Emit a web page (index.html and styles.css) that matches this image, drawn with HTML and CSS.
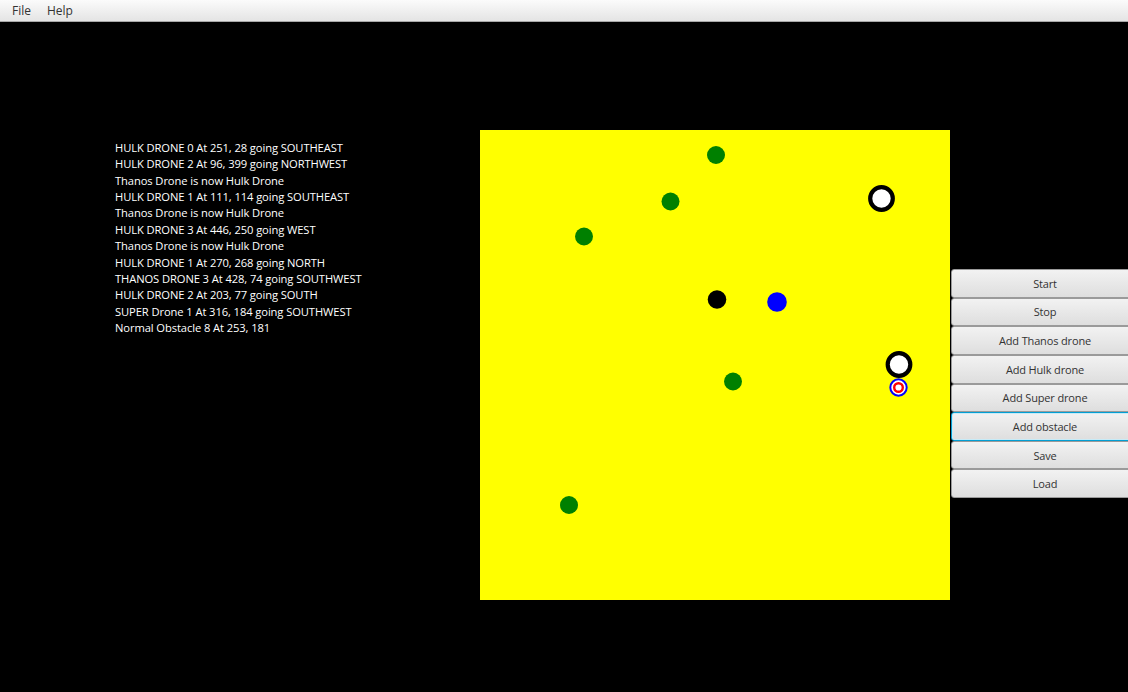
FILE: index.html
```html
<!DOCTYPE html>
<html>
<head>
<meta charset="utf-8">
<link rel="stylesheet" href="styles.css">
</head>
<body>
<div class="menubar">
  <span class="menu">File</span>
  <span class="menu">Help</span>
</div>
<div class="main">
  <div class="log">
    <div>HULK DRONE 0 At 251, 28 going SOUTHEAST</div>
    <div>HULK DRONE 2 At 96, 399 going NORTHWEST</div>
    <div>Thanos Drone is now Hulk Drone</div>
    <div>HULK DRONE 1 At 111, 114 going SOUTHEAST</div>
    <div>Thanos Drone is now Hulk Drone</div>
    <div>HULK DRONE 3 At 446, 250 going WEST</div>
    <div>Thanos Drone is now Hulk Drone</div>
    <div>HULK DRONE 1 At 270, 268 going NORTH</div>
    <div>THANOS DRONE 3 At 428, 74 going SOUTHWEST</div>
    <div>HULK DRONE 2 At 203, 77 going SOUTH</div>
    <div>SUPER Drone 1 At 316, 184 going SOUTHWEST</div>
    <div>Normal Obstacle 8 At 253, 181</div>
  </div>
  <svg class="arena" width="470" height="470" viewBox="0 0 470 470">
    <rect x="0" y="0" width="470" height="470" fill="#ffff00"/>
    <circle cx="236" cy="25" r="9" fill="#008000"/>
    <circle cx="190.5" cy="71.5" r="9" fill="#008000"/>
    <circle cx="104" cy="106.5" r="9" fill="#008000"/>
    <circle cx="253" cy="251.5" r="9" fill="#008000"/>
    <circle cx="89" cy="375" r="9" fill="#008000"/>
    <circle cx="237" cy="169.5" r="9.3" fill="#000000"/>
    <circle cx="297" cy="172" r="9.8" fill="#0000ff"/>
    <circle cx="401.5" cy="68.5" r="11.3" fill="#ffffff" stroke="#000" stroke-width="4.2"/>
    <circle cx="419" cy="234.5" r="11.3" fill="#ffffff" stroke="#000" stroke-width="4.2"/>
    <circle cx="418.5" cy="257.5" r="8.2" fill="#ffffff" stroke="#0000ff" stroke-width="2"/>
    <circle cx="418.5" cy="257.5" r="4.3" fill="#ffffff" stroke="#ff0000" stroke-width="2.4"/>
  </svg>
  <div class="buttons">
    <div class="btn">Start</div>
    <div class="btn">Stop</div>
    <div class="btn">Add Thanos drone</div>
    <div class="btn">Add Hulk drone</div>
    <div class="btn">Add Super drone</div>
    <div class="btn focused">Add obstacle</div>
    <div class="btn">Save</div>
    <div class="btn">Load</div>
  </div>
</div>
</body>
</html>
```
FILE: styles.css
```css
html, body {
  margin: 0;
  padding: 0;
  background: #000;
  width: 1128px;
  height: 692px;
  overflow: hidden;
  font-family: "Open Sans", "Noto Sans", "Liberation Sans", sans-serif;
}
.menubar {
  height: 21px;
  border-bottom: 1px solid #a8a8a8;
  background: linear-gradient(#fbfbfb, #e4e4e4);
  display: flex;
  align-items: center;
  padding-left: 4px;
}
.menu {
  font-size: 12px;
  color: #333;
  padding: 0 8px;
}
.main {
  display: flex;
  align-items: flex-start;
}
.log {
  flex: none;
  margin-left: 115px;
  margin-top: 118px;
  width: 365px;
  color: #fff;
  font-size: 11.2px;
  line-height: 16.36px;
  letter-spacing: -0.1px;
}
.arena {
  display: block;
  margin-top: 108px;
  flex: none;
}
.buttons {
  flex: none;
  margin-top: 247px;
  margin-left: 1px;
  width: 188px;
  display: flex;
  flex-direction: column;
}
.btn {
  height: 28.625px;
  box-sizing: border-box;
  border: 1px solid #9a9a9a;
  border-radius: 3px;
  background: linear-gradient(#f2f2f2, #dedede);
  color: #333;
  font-size: 11px;
  letter-spacing: -0.15px;
  display: flex;
  align-items: center;
  justify-content: center;
}
.btn.focused {
  border: 1px solid #039ed3;
  box-shadow: inset 0 0 0 1px #c8ebf7;
}
```
